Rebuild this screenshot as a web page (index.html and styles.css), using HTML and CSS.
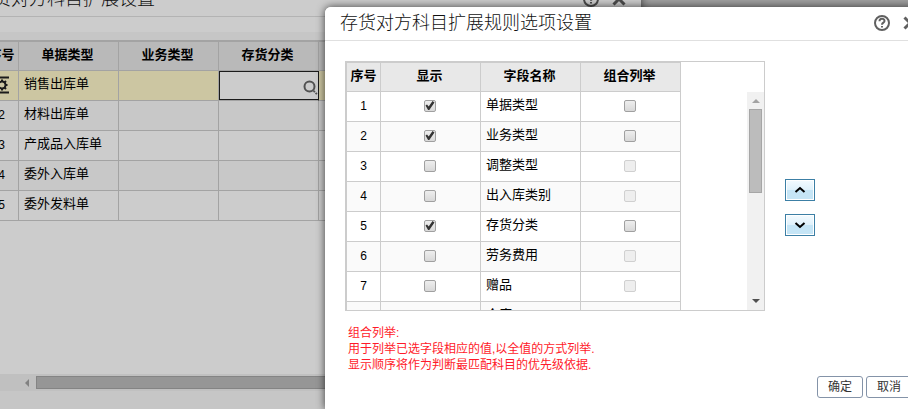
FILE: index.html
```html
<!DOCTYPE html>
<html lang="zh-CN">
<head>
  <meta charset="utf-8">
  <title>存货对方科目扩展规则选项设置</title>
  <link rel="stylesheet" href="styles.css">
</head>
<body>
  <!-- 扩展设置窗口 -->
  <div class="window window-back">
    <div class="window-header">
      <h2>存货对方科目扩展设置</h2>
      <button class="icon-button" aria-label="帮助">
        <svg width="18" height="18" viewBox="0 0 18 18"><circle cx="9" cy="9" r="7" /><path d="M6.5 7.2C6.5 4 11.5 4 11.5 7C11.5 8.8 9 8.6 9 10.8M9 12v1.6" /></svg>
      </button>
      <button class="icon-button" aria-label="关闭">
        <svg width="18" height="18" viewBox="0 0 18 18"><path class="cross" d="M3.5 3.5l11 11M14.5 3.5l-11 11" /></svg>
      </button>
    </div>
    <div class="toolbar"></div>
    <div class="back-body">
      <div class="grid-box back-box">
        <table class="grid">
          <thead>
            <tr><th class="col-no">序号</th><th>单据类型</th><th>业务类型</th><th>存货分类</th><th></th><th></th><th></th></tr>
          </thead>
          <tbody>
            <tr class="selected">
              <td class="col-no">
                <svg class="row-gear" width="14" height="18" viewBox="0 0 14 18"><path d="M0 1.5h14M0 16.5h14" /><circle cx="7" cy="9" r="3.5" /><path d="M7 3.5v2M7 12.5v2M1.5 9h2M10.5 9h2M3 5l2 2M9 11l2 2M11 5l-2 2M5 11l-2 2" /></svg>
              </td>
              <td>销售出库单</td>
              <td></td>
              <td class="editing">
                <div class="editor">
                  <input type="text" aria-label="存货分类">
                  <svg width="15" height="15" viewBox="0 0 15 15"><circle cx="6.5" cy="6.5" r="5" /><path d="M10.5 11l1.5 1M12.5 13l1.5 1" /></svg>
                </div>
              </td>
              <td></td><td></td><td></td>
            </tr>
            <tr><td class="col-no">2</td><td>材料出库单</td><td></td><td></td><td></td><td></td><td></td></tr>
            <tr><td class="col-no">3</td><td>产成品入库单</td><td></td><td></td><td></td><td></td><td></td></tr>
            <tr><td class="col-no">4</td><td>委外入库单</td><td></td><td></td><td></td><td></td><td></td></tr>
            <tr><td class="col-no">5</td><td>委外发料单</td><td></td><td></td><td></td><td></td><td></td></tr>
          </tbody>
        </table>
        <div class="scroll-x">
          <span class="arrow arrow-left"></span>
          <span class="thumb"></span>
        </div>
      </div>
    </div>
  </div>

  <div class="mask"></div>

  <!-- 规则选项窗口 -->
  <div class="window window-front">
    <div class="window-header">
      <h2>存货对方科目扩展规则选项设置</h2>
      <button class="icon-button" aria-label="帮助">
        <svg width="18" height="18" viewBox="0 0 18 18"><circle cx="9" cy="9" r="7" /><path d="M6.5 7.2C6.5 4 11.5 4 11.5 7C11.5 8.8 9 8.6 9 10.8M9 12v1.6" /></svg>
      </button>
      <button class="icon-button" aria-label="关闭">
        <svg width="18" height="18" viewBox="0 0 18 18"><path class="cross" d="M3.5 3.5l11 11M14.5 3.5l-11 11" /></svg>
      </button>
    </div>
    <div class="front-body">
      <div class="options">
        <div class="grid-box options-box">
          <table class="grid">
            <thead>
              <tr><th class="col-no">序号</th><th>显示</th><th>字段名称</th><th>组合列举</th></tr>
            </thead>
            <tbody>
              <tr>
                <td class="col-no">1</td>
                <td class="center"><input type="checkbox" aria-label="显示 单据类型" checked></td>
                <td>单据类型</td>
                <td class="center"><input type="checkbox" aria-label="组合列举 单据类型"></td>
              </tr>
              <tr>
                <td class="col-no">2</td>
                <td class="center"><input type="checkbox" aria-label="显示 业务类型" checked></td>
                <td>业务类型</td>
                <td class="center"><input type="checkbox" aria-label="组合列举 业务类型"></td>
              </tr>
              <tr>
                <td class="col-no">3</td>
                <td class="center"><input type="checkbox" aria-label="显示 调整类型"></td>
                <td>调整类型</td>
                <td class="center"><input type="checkbox" aria-label="组合列举 调整类型" disabled></td>
              </tr>
              <tr>
                <td class="col-no">4</td>
                <td class="center"><input type="checkbox" aria-label="显示 出入库类别"></td>
                <td>出入库类别</td>
                <td class="center"><input type="checkbox" aria-label="组合列举 出入库类别" disabled></td>
              </tr>
              <tr>
                <td class="col-no">5</td>
                <td class="center"><input type="checkbox" aria-label="显示 存货分类" checked></td>
                <td>存货分类</td>
                <td class="center"><input type="checkbox" aria-label="组合列举 存货分类"></td>
              </tr>
              <tr>
                <td class="col-no">6</td>
                <td class="center"><input type="checkbox" aria-label="显示 劳务费用"></td>
                <td>劳务费用</td>
                <td class="center"><input type="checkbox" aria-label="组合列举 劳务费用" disabled></td>
              </tr>
              <tr>
                <td class="col-no">7</td>
                <td class="center"><input type="checkbox" aria-label="显示 赠品"></td>
                <td>赠品</td>
                <td class="center"><input type="checkbox" aria-label="组合列举 赠品" disabled></td>
              </tr>
              <tr>
                <td class="col-no">8</td>
                <td class="center"><input type="checkbox" aria-label="显示 仓库"></td>
                <td>仓库</td>
                <td class="center"><input type="checkbox" aria-label="组合列举 仓库" disabled></td>
              </tr>
            </tbody>
          </table>
          <div class="scroll-y">
            <span class="arrow arrow-up"></span>
            <span class="thumb"></span>
            <span class="arrow arrow-down"></span>
          </div>
        </div>
        <div class="move-buttons">
          <button aria-label="上移"><svg width="12" height="8" viewBox="0 0 12 8"><path d="M1.5 6L6 2L10.5 6" /></svg></button>
          <button aria-label="下移"><svg width="12" height="8" viewBox="0 0 12 8"><path d="M1.5 2L6 6L10.5 2" /></svg></button>
        </div>
      </div>
      <p class="note">组合列举:<br>用于列举已选字段相应的值,以全值的方式列举.<br>显示顺序将作为判断最匹配科目的优先级依据.</p>
      <div class="footer">
        <button>确定</button>
        <button>取消</button>
      </div>
    </div>
  </div>
</body>
</html>
```

FILE: styles.css
```css
* {
  box-sizing: border-box;
}

body {
  margin: 0;
  height: 100vh;
  overflow: hidden;
  position: relative;
  background-color: #c8c8c8;
  font-family: "Liberation Sans", "Noto Sans CJK SC", sans-serif;
  font-size: 13px;
  color: #000;
}

button {
  font-family: inherit;
  cursor: pointer;
}

/* windows */
.window {
  position: absolute;
  display: flex;
  flex-direction: column;
  background-color: #fff;
  border-radius: 6px 6px 0 0;
}

.window-back {
  top: -17px;
  left: -37px;
  right: 267px;
  bottom: 0;
  background-color: #f8f8f8;
  box-shadow: 0 0 8px rgba(0, 0, 0, 0.6);
}

.window-front {
  top: 7px;
  left: 325px;
  right: -24px;
  bottom: 0;
  box-shadow: 0 0 8px rgba(0, 0, 0, 0.7);
}

.mask {
  position: absolute;
  inset: 0;
  background-color: rgba(0, 0, 0, 0.2);
}

.window-header {
  display: flex;
  flex-shrink: 0;
  align-items: center;
  gap: 10px;
  height: 34px;
  padding: 0 13px 2px 15px;
  background-color: #fff;
  border-bottom: 1px solid #e0e0e0;
  border-radius: 6px 6px 0 0;
}

.window-back .window-header {
  padding-left: 12px;
}

.window-header h2 {
  flex: 1;
  margin: 0;
  font-size: 18px;
  font-weight: 300;
  line-height: 24px;
  color: #111;
  white-space: nowrap;
}

.icon-button {
  padding: 0;
  border: none;
  background: none;
  height: 18px;
}

.icon-button svg {
  display: block;
  fill: none;
  stroke: #606060;
  stroke-width: 2;
}

.icon-button .cross {
  stroke-width: 3;
}

.toolbar {
  flex-shrink: 0;
  height: 15px;
  background-color: #fff;
}

.back-body {
  padding: 8px 0 8px 20px;
}

.front-body {
  padding: 20px 20px 0;
}

/* grids */
.grid-box {
  border: 1px solid #ccc;
  background-color: #fff;
  overflow: hidden;
}

.grid {
  table-layout: fixed;
  width: 0;
  border-collapse: separate;
  border-spacing: 0;
}

.grid th,
.grid td {
  width: 100px;
  height: 30px;
  padding: 0 5px 3px;
  border-right: 1px solid #ccc;
  border-bottom: 1px solid #ccc;
  line-height: 20px;
  white-space: nowrap;
}

.grid th {
  padding-right: 7px;
  border-top: 1px solid #ccc;
  background-color: #e8e8e8;
  font-weight: bold;
}

.grid td {
  font-weight: 400;
}

.grid tr:nth-child(even) td {
  background-color: #fafafa;
}

.grid .col-no {
  width: 35px;
  padding: 0 0 2px;
  border-left: 1px solid #ccc;
  text-align: center;
}

.grid td.col-no {
  font-size: 12px;
}

.grid .center {
  padding: 0 2px 2px 0;
  text-align: center;
}

.grid .selected td {
  background-color: #fff8cb;
}

.row-gear {
  display: block;
  margin: 0 auto;
  fill: none;
  stroke: #222;
  stroke-width: 2;
}

.grid td.editing {
  padding: 0;
  border-right-color: #222;
}

.editor {
  display: flex;
  align-items: center;
  height: 29px;
  padding-top: 3px;
  border: 1px solid #222;
  border-right: none;
  background-color: #fff;
}

.editor input {
  flex: 1;
  min-width: 0;
  border: none;
  outline: none;
  background: none;
}

.editor svg {
  fill: none;
  stroke: #666;
  stroke-width: 2;
}

/* check boxes */
input[type="checkbox"] {
  appearance: none;
  display: block;
  width: 12px;
  height: 12px;
  margin: 0 auto;
  border: 1px solid #a0a0a0;
  border-radius: 2px;
  background: linear-gradient(#eee, #d8d8d8);
}

input[type="checkbox"]:checked::before {
  content: "";
  display: block;
  width: 10px;
  height: 10px;
  background-color: #333;
  clip-path: polygon(10% 50%, 25% 40%, 42% 60%, 80% 5%, 100% 20%, 48% 95%, 36% 95%);
}

input[type="checkbox"]:disabled {
  border-color: #d0d0d0;
  background: #eee;
}

/* scroll bars */
.thumb {
  border: 1px solid #a6a6a6;
  background-color: #bcbcbc;
}

.arrow {
  border: 4px solid transparent;
}

.arrow-left {
  border-left-width: 0;
  border-right-color: #a3a3a3;
}

.arrow-up {
  border-top-width: 0;
  border-bottom-color: #a3a3a3;
}

.arrow-down {
  border-bottom-width: 0;
  border-top-color: #505050;
}

.back-box {
  display: flex;
  flex-direction: column;
  justify-content: space-between;
  height: 351px;
  box-shadow: -20px 0 0 #fff;
  border-bottom: none;
}

.scroll-x {
  display: flex;
  align-items: center;
  gap: 7px;
  height: 17px;
  padding-left: 41px;
  background-color: #f1f1f1;
}

.scroll-x .thumb {
  flex: 1;
  height: 13px;
}

.scroll-y {
  display: flex;
  flex-direction: column;
  align-items: center;
  width: 17px;
  margin-top: 30px;
  padding: 7px 0;
  background-color: #f1f1f1;
}

.scroll-y .thumb {
  width: 13px;
  height: 84px;
  margin-top: 6px;
  margin-bottom: auto;
}

/* options */
.options {
  display: flex;
  align-items: center;
  gap: 20px;
}

.options-box {
  flex: 0 1 420px;
  display: flex;
  justify-content: space-between;
  height: 250px;
}

.move-buttons {
  display: flex;
  flex-direction: column;
  gap: 13px;
  padding-top: 42px;
}

.move-buttons button {
  display: flex;
  align-items: center;
  justify-content: center;
  width: 30px;
  height: 22px;
  padding: 0;
  border: 1px solid #3c7fa5;
  background: linear-gradient(#f4fbff 0, #dff1fb 50%, #c5e5f6 50%, #c5e5f6 100%);
  box-shadow: inset 0 0 0 1px #fff;
}

.move-buttons svg {
  fill: none;
  stroke: #000;
  stroke-width: 2;
}

.note {
  margin: 14px 0 3px;
  padding-left: 3px;
  font-size: 12px;
  line-height: 16px;
  color: #ff1a2a;
}

.footer {
  display: flex;
  justify-content: flex-end;
  gap: 3px;
}

.footer button {
  width: 46px;
  height: 22px;
  padding: 0;
  border: 1px solid #8493a8;
  border-radius: 3px;
  background-color: #fff;
  font-size: 12px;
  line-height: 18px;
  color: #333;
}
```
